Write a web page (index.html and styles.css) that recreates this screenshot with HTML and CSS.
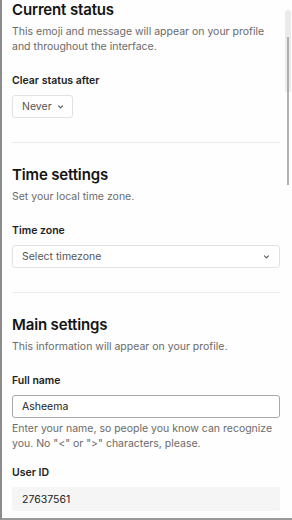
FILE: index.html
```html
<!DOCTYPE html>
<html lang="en">
<head>
<meta charset="utf-8">
<title>Settings</title>
<link rel="stylesheet" href="styles.css">
</head>
<body>
<div class="frame">
  <main class="settings">
    <section class="section">
      <h2 class="section-title">Current status</h2>
      <p class="section-desc">This emoji and message will appear on your profile and throughout the interface.</p>
      <div class="field">
        <label class="field-label">Clear status after</label>
        <button class="select select-compact" type="button">
          <span>Never</span>
          <svg class="chevron" width="5" height="4" viewBox="0 0 5 4"><path d="M0.5 0.9 L2.5 2.9 L4.5 0.9" fill="none" stroke="#555" stroke-width="1.1" stroke-linecap="round" stroke-linejoin="round"/></svg>
        </button>
      </div>
    </section>
    <hr class="divider">
    <section class="section">
      <h2 class="section-title">Time settings</h2>
      <p class="section-desc">Set your local time zone.</p>
      <div class="field">
        <label class="field-label">Time zone</label>
        <button class="select select-wide" type="button">
          <span>Select timezone</span>
          <svg class="chevron" width="5" height="4" viewBox="0 0 5 4"><path d="M0.5 0.9 L2.5 2.9 L4.5 0.9" fill="none" stroke="#555" stroke-width="1.1" stroke-linecap="round" stroke-linejoin="round"/></svg>
        </button>
      </div>
    </section>
    <hr class="divider">
    <section class="section">
      <h2 class="section-title">Main settings</h2>
      <p class="section-desc">This information will appear on your profile.</p>
      <div class="field">
        <label class="field-label">Full name</label>
        <div class="input">Asheema</div>
        <p class="field-help">Enter your name, so people you know can recognize you. No "&lt;" or "&gt;" characters, please.</p>
      </div>
      <div class="field field-tight">
        <label class="field-label">User ID</label>
        <div class="readonly">27637561</div>
      </div>
    </section>
  </main>
  <div class="scrollbar">
    <div class="scrollbar-track"></div>
    <div class="scrollbar-thumb"></div>
  </div>
</div>
</body>
</html>
```

FILE: styles.css
```css
* { box-sizing: border-box; }

html, body {
  margin: 0;
  padding: 0;
  background: #ffffff;
}

body {
  font-family: Inter, "Noto Sans", sans-serif;
  color: #1a1a1a;
}

.frame {
  position: relative;
  width: 292px;
  height: 520px;
  overflow: hidden;
  border-left: 2px solid #8c8c8c;
  border-bottom: 2px solid #9a9a9a;
  background: #fefefe;
}

.settings {
  padding: 0 12px 0 10px;
}

.section {
  display: flex;
  flex-direction: column;
  padding-bottom: 24px;
}

.section-title {
  margin: 0;
  font-size: 15px;
  line-height: 19px;
  font-weight: 600;
  color: #141414;
  letter-spacing: -0.15px;
}

.section-desc {
  margin: 5px 0 0;
  font-size: 10.5px;
  line-height: 15px;
  color: #6a6a6a;
}

.field {
  display: flex;
  flex-direction: column;
  margin-top: 19px;
}

.field-tight {
  margin-top: 14px;
}

.field-label {
  align-self: flex-start;
  font-size: 10.5px;
  line-height: 15px;
  font-weight: 600;
  color: #222;
  margin-bottom: 7px;
}

.select {
  display: flex;
  align-items: center;
  height: 23px;
  padding: 0 10px 0 9px;
  border: 1px solid #e2e2e2;
  border-radius: 3px;
  background: #fff;
  font-family: inherit;
  font-size: 10.5px;
  color: #555;
  cursor: pointer;
}

.select-compact {
  align-self: flex-start;
  gap: 6px;
  padding-right: 9px;
}

.select-wide {
  justify-content: space-between;
}

.chevron {
  display: block;
  flex: none;
}

.input {
  height: 23px;
  display: flex;
  align-items: center;
  padding: 0 9px;
  border: 1px solid #a9a9a9;
  border-radius: 3px;
  background: #fff;
  font-size: 10.5px;
  color: #222;
}

.field-help {
  margin: 3px 0 0;
  font-size: 10.5px;
  line-height: 15px;
  color: #6a6a6a;
}

.readonly {
  height: 24px;
  display: flex;
  align-items: center;
  padding: 0 10px;
  border-radius: 3px;
  background: #f5f5f5;
  font-size: 10.5px;
  color: #222;
}

.divider {
  margin: 0 0 22px;
  border: 0;
  border-top: 1px solid #ececec;
}

.scrollbar {
  position: absolute;
  top: 0;
  right: 0;
  width: 8px;
  height: 100%;
}

.scrollbar-track {
  position: absolute;
  top: 10px;
  left: 1px;
  width: 6px;
  height: 82px;
  border-radius: 3px 3px 2px 2px;
  background: #ebebeb;
}

.scrollbar-thumb {
  position: absolute;
  top: 37px;
  left: 3px;
  width: 2px;
  height: 148px;
  background: #b0b0b0;
}
```
